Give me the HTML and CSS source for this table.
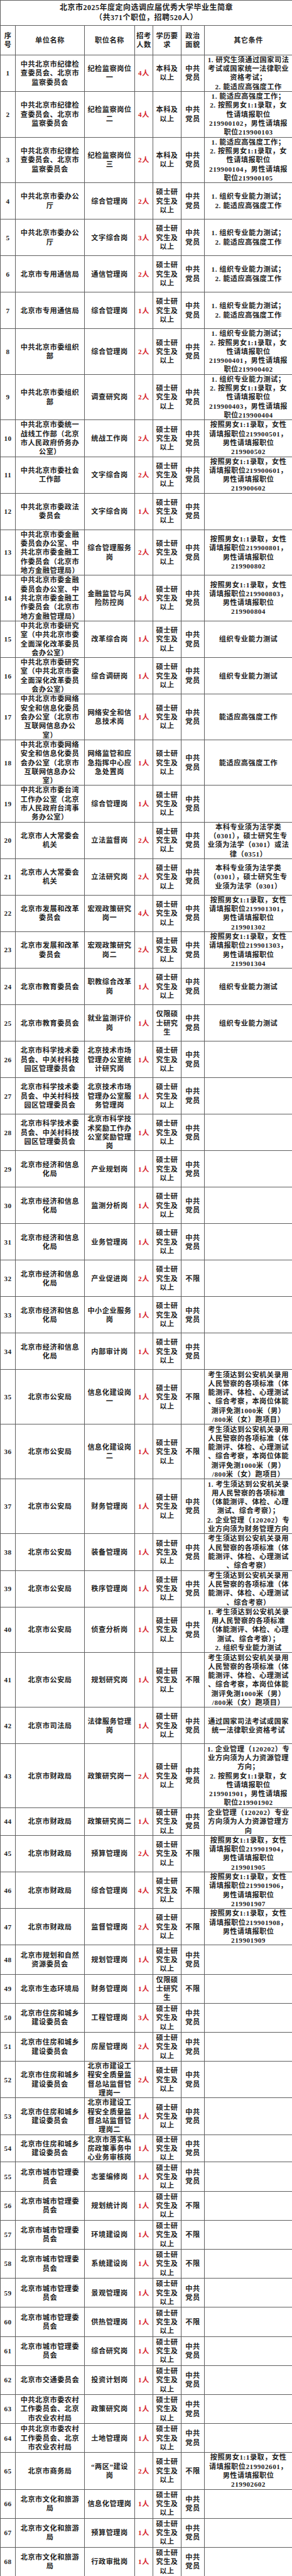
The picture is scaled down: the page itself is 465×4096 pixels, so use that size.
FILE: index.html
```html
<!DOCTYPE html>
<html lang="zh-CN">
<head>
<meta charset="utf-8">
<title>北京市2025年度定向选调应届优秀大学毕业生简章</title>
<link rel="stylesheet" href="styles.css">
</head>
<body>
<table class="sheet">
<colgroup><col class="w1"><col class="w2"><col class="w3"><col class="w4"><col class="w5"><col class="w6"><col class="w7"></colgroup>
<tr class="ht"><td colspan="7" class="title">北京市2025年度定向选调应届优秀大学毕业生简章<br>（共371个职位，招聘520人）</td></tr>
<tr class="hd"><td>序号</td><td>单位名称</td><td>职位名称</td><td>招考人数</td><td>学历要求</td><td>政治面貌</td><td>其它条件</td></tr>
<tr class="h4"><td>1</td><td>中共北京市纪律检查委员会、北京市监察委员会</td><td>纪检监察岗位一</td><td class="n">4人</td><td>本科及以上</td><td>中共党员</td><td>1. 研究生须通过国家司法<br>考试或国家统一法律职业<br>资格考试；<br>2. 能适应高强度工作</td></tr>
<tr class="h5"><td>2</td><td>中共北京市纪律检查委员会、北京市监察委员会</td><td>纪检监察岗位二</td><td class="n">4人</td><td>本科及以上</td><td>中共党员</td><td>1. 能适应高强度工作；<br>2. 按照男女1:1录取，女<br>性请填报职位<br>219900102，男性请填报<br>职位219900103</td></tr>
<tr class="h5"><td>3</td><td>中共北京市纪律检查委员会、北京市监察委员会</td><td>纪检监察岗位三</td><td class="n">2人</td><td>本科及以上</td><td>中共党员</td><td>1. 能适应高强度工作；<br>2. 按照男女1:1录取，女<br>性请填报职位<br>219900104，男性请填报<br>职位219900105</td></tr>
<tr class="h4"><td>4</td><td>中共北京市委办公厅</td><td>综合管理岗</td><td class="n">2人</td><td>硕士研究生及以上</td><td>中共党员</td><td>1. 组织专业能力测试；<br>2. 能适应高强度工作</td></tr>
<tr class="h4"><td>5</td><td>中共北京市委办公厅</td><td>文字综合岗</td><td class="n">3人</td><td>硕士研究生及以上</td><td>中共党员</td><td>1. 组织专业能力测试；<br>2. 能适应高强度工作</td></tr>
<tr class="h4"><td>6</td><td>北京市专用通信局</td><td>通信管理岗</td><td class="n">2人</td><td>硕士研究生及以上</td><td>中共党员</td><td>1. 组织专业能力测试；<br>2. 能适应高强度工作</td></tr>
<tr class="h4"><td>7</td><td>北京市专用通信局</td><td>综合管理岗</td><td class="n">1人</td><td>硕士研究生及以上</td><td>中共党员</td><td>1. 组织专业能力测试；<br>2. 能适应高强度工作</td></tr>
<tr class="h5"><td>8</td><td>中共北京市委组织部</td><td>综合管理岗</td><td class="n">2人</td><td>硕士研究生及以上</td><td>中共党员</td><td>1. 组织专业能力测试；<br>2. 按照男女1:1录取，女<br>性请填报职位<br>219900401，男性请填报<br>职位219900402</td></tr>
<tr class="h5"><td>9</td><td>中共北京市委组织部</td><td>调查研究岗</td><td class="n">2人</td><td>硕士研究生及以上</td><td>中共党员</td><td>1. 组织专业能力测试；<br>2. 按照男女1:1录取，女<br>性请填报职位<br>219900403，男性请填报<br>职位219900404</td></tr>
<tr class="h4"><td>10</td><td>中共北京市委统一战线工作部（北京市人民政府侨务办公室）</td><td>统战工作岗</td><td class="n">2人</td><td>硕士研究生及以上</td><td>中共党员</td><td>按照男女1:1录取，女性<br>请填报职位219900501，<br>男性请填报职位<br>219900502</td></tr>
<tr class="h4"><td>11</td><td>中共北京市委社会工作部</td><td>文字综合岗</td><td class="n">2人</td><td>硕士研究生及以上</td><td>中共党员</td><td>按照男女1:1录取，女性<br>请填报职位219900601，<br>男性请填报职位<br>219900602</td></tr>
<tr class="h4"><td>12</td><td>中共北京市委政法委员会</td><td>文字综合岗</td><td class="n">1人</td><td>硕士研究生及以上</td><td>中共党员</td><td></td></tr>
<tr class="h5"><td>13</td><td>中共北京市委金融委员会办公室、中共北京市委金融工作委员会（北京市地方金融管理局）</td><td>综合管理服务岗</td><td class="n">2人</td><td>硕士研究生及以上</td><td>中共党员</td><td>按照男女1:1录取，女性<br>请填报职位219900801，<br>男性请填报职位<br>219900802</td></tr>
<tr class="h5"><td>14</td><td>中共北京市委金融委员会办公室、中共北京市委金融工作委员会（北京市地方金融管理局）</td><td>金融监管与风险防控岗</td><td class="n">4人</td><td>硕士研究生及以上</td><td>中共党员</td><td>按照男女1:1录取，女性<br>请填报职位219900803，<br>男性请填报职位<br>219900804</td></tr>
<tr class="h4"><td>15</td><td>中共北京市委研究室（中共北京市委全面深化改革委员会办公室）</td><td>改革综合岗</td><td class="n">1人</td><td>硕士研究生及以上</td><td>中共党员</td><td>组织专业能力测试</td></tr>
<tr class="h4"><td>16</td><td>中共北京市委研究室（中共北京市委全面深化改革委员会办公室）</td><td>综合调研岗</td><td class="n">1人</td><td>硕士研究生及以上</td><td>中共党员</td><td>组织专业能力测试</td></tr>
<tr class="h5"><td>17</td><td>中共北京市委网络安全和信息化委员会办公室（北京市互联网信息办公室）</td><td>网络安全和信息技术岗</td><td class="n">1人</td><td>硕士研究生及以上</td><td>中共党员</td><td>能适应高强度工作</td></tr>
<tr class="h5"><td>18</td><td>中共北京市委网络安全和信息化委员会办公室（北京市互联网信息办公室）</td><td>网络监管和应急指挥中心应急处置岗</td><td class="n">1人</td><td>硕士研究生及以上</td><td>中共党员</td><td>能适应高强度工作</td></tr>
<tr class="h4"><td>19</td><td>中共北京市委台湾工作办公室（北京市人民政府台湾事务办公室）</td><td>综合管理岗</td><td class="n">1人</td><td>硕士研究生及以上</td><td>中共党员</td><td></td></tr>
<tr class="h4"><td>20</td><td>北京市人大常委会机关</td><td>立法监督岗</td><td class="n">2人</td><td>硕士研究生及以上</td><td>中共党员</td><td>本科专业须为法学类<br>（0301），硕士研究生专<br>业须为法学（0301）或法<br>律（0351）</td></tr>
<tr class="h4"><td>21</td><td>北京市人大常委会机关</td><td>立法研究岗</td><td class="n">2人</td><td>硕士研究生及以上</td><td>中共党员</td><td>本科专业须为法学类<br>（0301），硕士研究生专<br>业须为法学（0301）</td></tr>
<tr class="h4"><td>22</td><td>北京市发展和改革委员会</td><td>宏观政策研究岗一</td><td class="n">4人</td><td>硕士研究生及以上</td><td>中共党员</td><td>按照男女1:1录取，女性<br>请填报职位219901301，<br>男性请填报职位<br>219901302</td></tr>
<tr class="h4"><td>23</td><td>北京市发展和改革委员会</td><td>宏观政策研究岗二</td><td class="n">2人</td><td>硕士研究生及以上</td><td>中共党员</td><td>按照男女1:1录取，女性<br>请填报职位219901303，<br>男性请填报职位<br>219901304</td></tr>
<tr class="h4"><td>24</td><td>北京市教育委员会</td><td>职教综合改革岗</td><td class="n">1人</td><td>硕士研究生及以上</td><td>中共党员</td><td>组织专业能力测试</td></tr>
<tr class="h4"><td>25</td><td>北京市教育委员会</td><td>就业监测评价岗</td><td class="n">1人</td><td>仅限硕士研究生</td><td>中共党员</td><td>组织专业能力测试</td></tr>
<tr class="h4"><td>26</td><td>北京市科学技术委员会、中关村科技园区管理委员会</td><td>北京技术市场管理办公室统计研究岗</td><td class="n">1人</td><td>硕士研究生及以上</td><td>中共党员</td><td></td></tr>
<tr class="h4"><td>27</td><td>北京市科学技术委员会、中关村科技园区管理委员会</td><td>北京技术市场管理办公室服务管理岗</td><td class="n">1人</td><td>硕士研究生及以上</td><td>中共党员</td><td></td></tr>
<tr class="h4"><td>28</td><td>北京市科学技术委员会、中关村科技园区管理委员会</td><td>北京市科学技术奖励工作办公室奖励管理岗</td><td class="n">1人</td><td>硕士研究生及以上</td><td>中共党员</td><td></td></tr>
<tr class="h4"><td>29</td><td>北京市经济和信息化局</td><td>产业规划岗</td><td class="n">1人</td><td>硕士研究生及以上</td><td>中共党员</td><td></td></tr>
<tr class="h4"><td>30</td><td>北京市经济和信息化局</td><td>监测分析岗</td><td class="n">1人</td><td>硕士研究生及以上</td><td>中共党员</td><td></td></tr>
<tr class="h4"><td>31</td><td>北京市经济和信息化局</td><td>业务管理岗</td><td class="n">1人</td><td>硕士研究生及以上</td><td>中共党员</td><td></td></tr>
<tr class="h4"><td>32</td><td>北京市经济和信息化局</td><td>产业促进岗</td><td class="n">2人</td><td>硕士研究生及以上</td><td>不限</td><td></td></tr>
<tr class="h4"><td>33</td><td>北京市经济和信息化局</td><td>中小企业服务岗</td><td class="n">1人</td><td>硕士研究生及以上</td><td>中共党员</td><td></td></tr>
<tr class="h4"><td>34</td><td>北京市经济和信息化局</td><td>内部审计岗</td><td class="n">1人</td><td>硕士研究生及以上</td><td>中共党员</td><td></td></tr>
<tr class="h6"><td>35</td><td>北京市公安局</td><td>信息化建设岗一</td><td class="n">1人</td><td>硕士研究生及以上</td><td>不限</td><td>考生须达到公安机关录用<br>人民警察的各项标准（体<br>能测评、体检、心理测试<br>、综合考察，本岗位体能<br>测评免测1000米（男）<br>/800米（女）跑项目）</td></tr>
<tr class="h6"><td>36</td><td>北京市公安局</td><td>信息化建设岗二</td><td class="n">1人</td><td>硕士研究生及以上</td><td>不限</td><td>考生须达到公安机关录用<br>人民警察的各项标准（体<br>能测评、体检、心理测试<br>、综合考察，本岗位体能<br>测评免测1000米（男）<br>/800米（女）跑项目）</td></tr>
<tr class="h6"><td>37</td><td>北京市公安局</td><td>财务管理岗</td><td class="n">1人</td><td>硕士研究生及以上</td><td>中共党员</td><td>1. 考生须达到公安机关录<br>用人民警察的各项标准<br>（体能测评、体检、心理<br>测试、综合考察）；<br>2. 企业管理（120202）专<br>业方向须为财务管理方向</td></tr>
<tr class="h4"><td>38</td><td>北京市公安局</td><td>装备管理岗</td><td class="n">1人</td><td>硕士研究生及以上</td><td>中共党员</td><td>考生须达到公安机关录用<br>人民警察的各项标准（体<br>能测评、体检、心理测试<br>、综合考察）</td></tr>
<tr class="h4"><td>39</td><td>北京市公安局</td><td>秩序管理岗</td><td class="n">1人</td><td>硕士研究生及以上</td><td>中共党员</td><td>考生须达到公安机关录用<br>人民警察的各项标准（体<br>能测评、体检、心理测试<br>、综合考察）</td></tr>
<tr class="h5"><td>40</td><td>北京市公安局</td><td>侦查分析岗</td><td class="n">1人</td><td>硕士研究生及以上</td><td>中共党员</td><td>1. 考生须达到公安机关录<br>用人民警察的各项标准<br>（体能测评、体检、心理<br>测试、综合考察）；<br>2. 组织专业能力测试</td></tr>
<tr class="h6"><td>41</td><td>北京市公安局</td><td>规划研究岗</td><td class="n">1人</td><td>硕士研究生及以上</td><td>不限</td><td>考生须达到公安机关录用<br>人民警察的各项标准（体<br>能测评、体检、心理测试<br>、综合考察，本岗位体能<br>测评免测1000米（男）<br>/800米（女）跑项目）</td></tr>
<tr class="h4"><td>42</td><td>北京市司法局</td><td>法律服务管理岗</td><td class="n">1人</td><td>硕士研究生及以上</td><td>中共党员</td><td>通过国家司法考试或国家<br>统一法律职业资格考试</td></tr>
<tr class="h7"><td>43</td><td>北京市财政局</td><td>政策研究岗一</td><td class="n">2人</td><td>硕士研究生及以上</td><td>中共党员</td><td>1. 企业管理（120202）专<br>业方向须为人力资源管理<br>方向；<br>2. 按照男女1:1录取，女<br>性请填报职位<br>219901901，男性请填报<br>职位219901902</td></tr>
<tr class="h3"><td>44</td><td>北京市财政局</td><td>政策研究岗二</td><td class="n">1人</td><td>硕士研究生及以上</td><td>中共党员</td><td>企业管理（120202）专业<br>方向须为人力资源管理方<br>向</td></tr>
<tr class="h4"><td>45</td><td>北京市财政局</td><td>预算管理岗</td><td class="n">2人</td><td>硕士研究生及以上</td><td>不限</td><td>按照男女1:1录取，女性<br>请填报职位219901904，<br>男性请填报职位<br>219901905</td></tr>
<tr class="h4"><td>46</td><td>北京市财政局</td><td>综合管理岗</td><td class="n">4人</td><td>硕士研究生及以上</td><td>不限</td><td>按照男女1:1录取，女性<br>请填报职位219901906，<br>男性请填报职位<br>219901907</td></tr>
<tr class="h4"><td>47</td><td>北京市财政局</td><td>监督管理岗</td><td class="n">2人</td><td>硕士研究生及以上</td><td>不限</td><td>按照男女1:1录取，女性<br>请填报职位219901908，<br>男性请填报职位<br>219901909</td></tr>
<tr class="h3p"><td>48</td><td>北京市规划和自然资源委员会</td><td>规划管理岗</td><td class="n">1人</td><td>硕士研究生及以上</td><td>中共党员</td><td></td></tr>
<tr class="h3p"><td>49</td><td>北京市生态环境局</td><td>财务管理岗</td><td class="n">1人</td><td>仅限硕士研究生</td><td>不限</td><td></td></tr>
<tr class="h3p"><td>50</td><td>北京市住房和城乡建设委员会</td><td>工程管理岗</td><td class="n">3人</td><td>硕士研究生及以上</td><td>中共党员</td><td></td></tr>
<tr class="h3p"><td>51</td><td>北京市住房和城乡建设委员会</td><td>房屋管理岗</td><td class="n">2人</td><td>硕士研究生及以上</td><td>中共党员</td><td></td></tr>
<tr class="h4"><td>52</td><td>北京市住房和城乡建设委员会</td><td>北京市建设工程安全质量监督总站监督管理岗一</td><td class="n">2人</td><td>硕士研究生及以上</td><td>中共党员</td><td></td></tr>
<tr class="h4"><td>53</td><td>北京市住房和城乡建设委员会</td><td>北京市建设工程安全质量监督总站监督管理岗二</td><td class="n">1人</td><td>硕士研究生及以上</td><td>中共党员</td><td></td></tr>
<tr class="h3"><td>54</td><td>北京市住房和城乡建设委员会</td><td>北京市落实私房政策事务中心业务审核岗</td><td class="n">1人</td><td>硕士研究生及以上</td><td>中共党员</td><td></td></tr>
<tr class="h3p"><td>55</td><td>北京市城市管理委员会</td><td>志鉴编修岗</td><td class="n">1人</td><td>硕士研究生及以上</td><td>中共党员</td><td></td></tr>
<tr class="h3p"><td>56</td><td>北京市城市管理委员会</td><td>规划统计岗</td><td class="n">1人</td><td>硕士研究生及以上</td><td>不限</td><td></td></tr>
<tr class="h3p"><td>57</td><td>北京市城市管理委员会</td><td>环境建设岗</td><td class="n">1人</td><td>硕士研究生及以上</td><td>不限</td><td></td></tr>
<tr class="h3p"><td>58</td><td>北京市城市管理委员会</td><td>系统建设岗</td><td class="n">1人</td><td>硕士研究生及以上</td><td>不限</td><td></td></tr>
<tr class="h3p"><td>59</td><td>北京市城市管理委员会</td><td>景观管理岗</td><td class="n">1人</td><td>硕士研究生及以上</td><td>中共党员</td><td></td></tr>
<tr class="h3p"><td>60</td><td>北京市城市管理委员会</td><td>供热管理岗</td><td class="n">1人</td><td>硕士研究生及以上</td><td>不限</td><td></td></tr>
<tr class="h3p"><td>61</td><td>北京市城市管理委员会</td><td>综合研究岗</td><td class="n">1人</td><td>硕士研究生及以上</td><td>中共党员</td><td></td></tr>
<tr class="h3p"><td>62</td><td>北京市交通委员会</td><td>投资计划岗</td><td class="n">1人</td><td>硕士研究生及以上</td><td>中共党员</td><td></td></tr>
<tr class="h3p"><td>63</td><td>中共北京市委农村工作委员会、北京市农业农村局</td><td>政策研究岗</td><td class="n">1人</td><td>硕士研究生及以上</td><td>中共党员</td><td></td></tr>
<tr class="h3p"><td>64</td><td>中共北京市委农村工作委员会、北京市农业农村局</td><td>土地管理岗</td><td class="n">1人</td><td>硕士研究生及以上</td><td>中共党员</td><td></td></tr>
<tr class="h4"><td>65</td><td>北京市商务局</td><td>“两区”建设<br>岗</td><td class="n">2人</td><td>硕士研究生及以上</td><td>不限</td><td>按照男女1:1录取，女性<br>请填报职位219902601，<br>男性请填报职位<br>219902602</td></tr>
<tr class="h3p"><td>66</td><td>北京市文化和旅游局</td><td>信息化管理岗</td><td class="n">1人</td><td>硕士研究生及以上</td><td>中共党员</td><td></td></tr>
<tr class="h3p"><td>67</td><td>北京市文化和旅游局</td><td>预算管理岗</td><td class="n">1人</td><td>硕士研究生及以上</td><td>中共党员</td><td></td></tr>
<tr class="h3p"><td>68</td><td>北京市文化和旅游局</td><td>行政审批岗</td><td class="n">1人</td><td>硕士研究生及以上</td><td>中共党员</td><td></td></tr>
</table>
</body>
</html>
```
FILE: styles.css
```css
html, body {
  margin: 0;
  padding: 0;
  background: #ffffff;
}

.sheet {
  width: 465px;
  border-collapse: collapse;
  table-layout: fixed;
  font-family: "Liberation Serif", "Noto Sans CJK SC", serif;
  font-weight: 700;
  font-size: 11.2px;
  letter-spacing: 0.5px;
  line-height: 14.3px;
  color: #1e1e1e;
}

.w1 { width: 24px; }
.w2 { width: 110px; }
.w3 { width: 80px; }
.w4 { width: 29px; }
.w5 { width: 45px; }
.w6 { width: 37px; }
.w7 { width: 140px; }

.sheet td {
  border: 1px solid #5e5e5e;
  padding: 0 2px;
  text-align: center;
  vertical-align: middle;
}

.sheet td:nth-child(2) {
  padding: 0 5px;
}

.sheet td:nth-child(6) {
  padding: 0 4px;
}

.sheet td:nth-child(7) {
  white-space: nowrap;
  padding: 0 1px;
}

.sheet td.title {
  font-size: 12px;
  line-height: 15.5px;
  white-space: normal;
  padding: 0;
}

.n {
  color: #d6222a;
}

.ht { height: 40.3px; }
.hd { height: 46.5px; }
.h3 { height: 43.5px; }
.h3p { height: 46.2px; }
.h4 { height: 58px; }
.h5 { height: 72.6px; }
.h6 { height: 87px; }
.h7 { height: 101.6px; }
```
